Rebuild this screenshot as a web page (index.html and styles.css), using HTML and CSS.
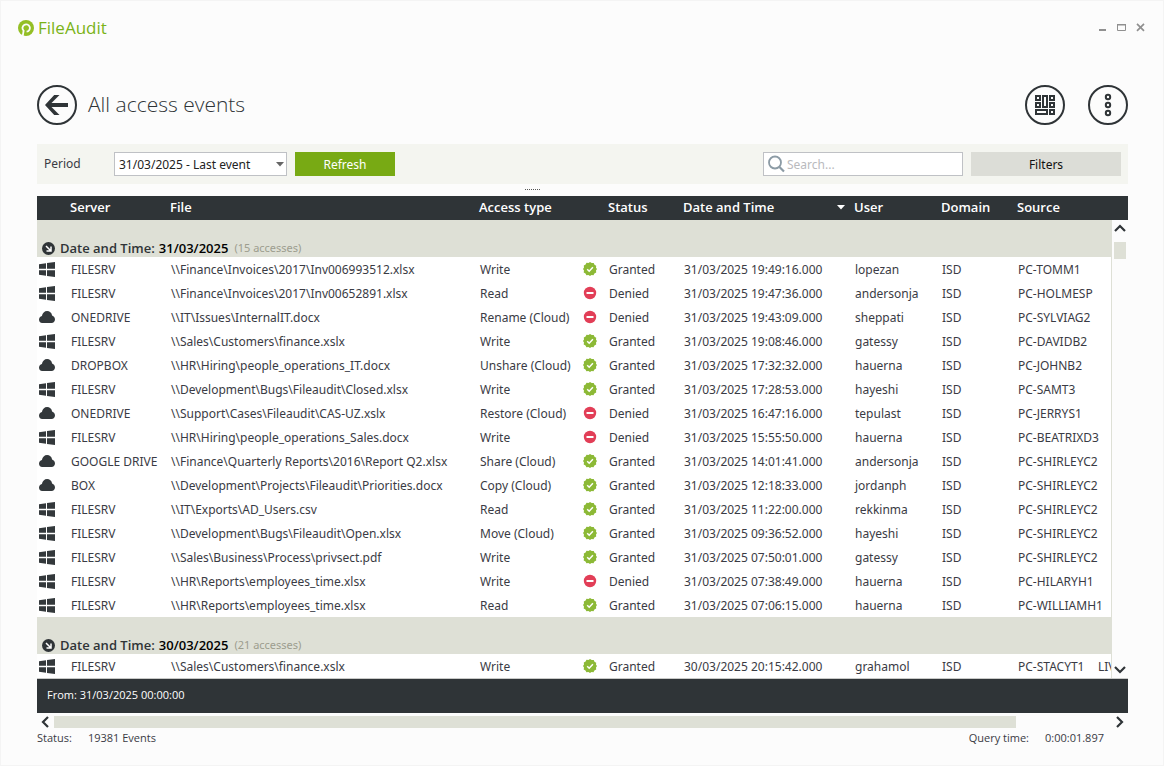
FILE: index.html
```
<!DOCTYPE html>
<html lang="en">
<head>
<meta charset="utf-8">
<title>FileAudit</title>
<link rel="stylesheet" href="styles.css">
</head>
<body>
<svg class="sprite" aria-hidden="true">
  <symbol id="win" viewBox="0 0 16 15"><path d="M0 2.200 7 1.200V6.700H0zM8 1 16 0V6.700H8zM0 8.200H7V13.800L0 12.800zM8 8.200H16V15L8 14z"/></symbol>
  <symbol id="cloud" viewBox="0 0 16 12"><path d="M3.600 12A3.500 3.500 0 0 1 0 8.600C0 6.900 1.200 5.500 2.900 5 3.400 2 5.500 0 8.100 0c2.500 0 4.600 1.700 5 4.400C14.900 5.100 16 6.600 16 8.300 16 10.500 14.500 12 12.500 12z"/></symbol>
  <symbol id="ok" viewBox="0 0 14 14"><path fill="#8cb936" d="M7 0l1.700 1.100 2-.2.8 1.800 1.700 1-.2 2L14 7l-1 1.600.2 2-1.800.9-.9 1.800-2-.3L7 14l-1.600-1-2 .2-.9-1.800-1.800-.9.300-2L0 7l1-1.500-.2-2 1.800-.9.900-1.800 2 .3z"/><path fill="none" stroke="#fff" stroke-width="1.500" d="M4.200 7.200l2 2 3.700-4"/></symbol>
  <symbol id="no" viewBox="0 0 14 14"><circle cx="7" cy="7" r="6.200" fill="#e23e57"/><path fill="#fff" d="M3.500 6h7v2h-7z"/></symbol>
  <symbol id="fold" viewBox="0 0 13 13"><circle cx="6.500" cy="6.500" r="6.500" fill="#2f3437"/><path fill="none" stroke="#fff" stroke-width="1.500" d="M4 4l4.500 4.500M9 4.500V9H4.500"/></symbol>
</svg>
<div class="window">
  <header class="titlebar">
    <div class="brand">
      <svg width="17" height="17" viewBox="0 0 17 17"><circle cx="8" cy="8" r="8" fill="#94bf26"/><path d="M4.600 17l1-6.300A3.700 3.700 0 1 1 8.600 11.700" fill="none" stroke="#fcfcfc" stroke-width="1.800"/><circle cx="8.200" cy="8" r="1.900" fill="#94bf26"/></svg>
      <span>FileAudit</span>
    </div>
    <div class="winbtns">
      <button aria-label="Minimize"><svg width="10" height="9" viewBox="0 0 10 9"><path d="M1 6h7v2H1z" fill="#909090"/></svg></button>
      <button aria-label="Maximize"><svg width="10" height="9" viewBox="0 0 10 9"><path d="M.5 1.500h8v6h-8z" fill="none" stroke="#909090"/><path d="M0 1h9v1.500H0z" fill="#909090"/></svg></button>
      <button aria-label="Close"><svg width="10" height="9" viewBox="0 0 10 9"><path d="M1 .8l7 7M8 .8l-7 7" fill="none" stroke="#909090" stroke-width="1.700"/></svg></button>
    </div>
  </header>
  <main class="content">
    <div class="heading">
      <button class="round" aria-label="Back"><svg width="40" height="40" viewBox="0 0 40 40"><circle cx="20" cy="20" r="19" fill="none" stroke="#2f3437" stroke-width="2"/><path d="M31 18v4H14.500l8 8h-5.300L8 20l9.200-10h5.300l-8 8z" fill="#2f3437"/></svg></button>
      <h1>All access events</h1>
      <button class="round" aria-label="Dashboard"><svg width="40" height="40" viewBox="0 0 40 40" fill="none" stroke="#2f3437"><circle cx="20" cy="20" r="19" stroke-width="2"/><path stroke-width="2" d="M11 11h4v4h-4zM11 18h4v4h-4zM18 11h4v11h-4zM25 11h4v4h-4zM25 18h4v4h-4zM11 25h11v4H11zM25 25h4v4h-4z"/></svg></button>
      <button class="round more" aria-label="More"><svg width="40" height="40" viewBox="0 0 40 40" fill="none" stroke="#2f3437" stroke-width="2"><circle cx="20" cy="20" r="19"/><circle cx="20" cy="12" r="2.200"/><circle cx="20" cy="20" r="2.200"/><circle cx="20" cy="28" r="2.200"/></svg></button>
    </div>
    <div class="toolbar">
      <label for="period">Period</label>
      <div class="select">
        <select id="period"><option>31/03/2025 - Last event</option></select>
        <svg width="8" height="5" viewBox="0 0 8 5"><path d="M0 0h8L4 4.500z" fill="#666"/></svg>
      </div>
      <button class="refresh">Refresh</button>
      <label class="search">
        <svg width="18" height="18" viewBox="0 0 18 18" fill="none" stroke="#8c9ba5"><circle cx="7" cy="7.500" r="6" stroke-width="1.800"/><path d="M11.500 12l4.500 4.500" stroke-width="2.200"/></svg>
        <input type="search" placeholder="Search..." aria-label="Search">
      </label>
      <button class="filters">Filters</button>
    </div>
    <div class="grip"><i></i></div>
    <div class="grid">
      <table>
        <colgroup><col class="c-icon"><col class="c-server"><col><col class="c-access"><col class="c-mark"><col class="c-status"><col class="c-date"><col class="c-user"><col class="c-domain"><col class="c-source"><col class="c-extra"></colgroup>
        <thead><tr><th></th><th>Server</th><th>File</th><th>Access type</th><th></th><th>Status</th><th><span class="sort">Date and Time<svg width="10" height="5" viewBox="0 0 10 5"><path d="M1 0h8L5 4.500z" fill="#fff"/></svg></span></th><th>User</th><th>Domain</th><th>Source</th><th></th></tr></thead>
        <tbody>
          <tr class="group"><td colspan="11"><div><svg width="13" height="13"><use href="#fold"/></svg><b>Date and Time:</b><b class="day">31/03/2025</b><span>(15 accesses)</span></div></td></tr>
          <tr><td><svg width="16" height="15"><use href="#win"/></svg></td><td>FILESRV</td><td>\\Finance\Invoices\2017\Inv006993512.xlsx</td><td>Write</td><td class="mark"><svg width="14" height="14"><use href="#ok"/></svg></td><td>Granted</td><td>31/03/2025 19:49:16.000</td><td>lopezan</td><td>ISD</td><td>PC-TOMM1</td><td></td></tr>
          <tr><td><svg width="16" height="15"><use href="#win"/></svg></td><td>FILESRV</td><td>\\Finance\Invoices\2017\Inv00652891.xlsx</td><td>Read</td><td class="mark"><svg width="14" height="14"><use href="#no"/></svg></td><td>Denied</td><td>31/03/2025 19:47:36.000</td><td>andersonja</td><td>ISD</td><td>PC-HOLMESP</td><td></td></tr>
          <tr><td class="mark"><svg width="16" height="12"><use href="#cloud"/></svg></td><td>ONEDRIVE</td><td>\\IT\Issues\InternalIT.docx</td><td>Rename (Cloud)</td><td class="mark"><svg width="14" height="14"><use href="#no"/></svg></td><td>Denied</td><td>31/03/2025 19:43:09.000</td><td>sheppati</td><td>ISD</td><td>PC-SYLVIAG2</td><td></td></tr>
          <tr><td><svg width="16" height="15"><use href="#win"/></svg></td><td>FILESRV</td><td>\\Sales\Customers\finance.xslx</td><td>Write</td><td class="mark"><svg width="14" height="14"><use href="#ok"/></svg></td><td>Granted</td><td>31/03/2025 19:08:46.000</td><td>gatessy</td><td>ISD</td><td>PC-DAVIDB2</td><td></td></tr>
          <tr><td class="mark"><svg width="16" height="12"><use href="#cloud"/></svg></td><td>DROPBOX</td><td>\\HR\Hiring\people_operations_IT.docx</td><td>Unshare (Cloud)</td><td class="mark"><svg width="14" height="14"><use href="#ok"/></svg></td><td>Granted</td><td>31/03/2025 17:32:32.000</td><td>hauerna</td><td>ISD</td><td>PC-JOHNB2</td><td></td></tr>
          <tr><td><svg width="16" height="15"><use href="#win"/></svg></td><td>FILESRV</td><td>\\Development\Bugs\Fileaudit\Closed.xlsx</td><td>Write</td><td class="mark"><svg width="14" height="14"><use href="#ok"/></svg></td><td>Granted</td><td>31/03/2025 17:28:53.000</td><td>hayeshi</td><td>ISD</td><td>PC-SAMT3</td><td></td></tr>
          <tr><td class="mark"><svg width="16" height="12"><use href="#cloud"/></svg></td><td>ONEDRIVE</td><td>\\Support\Cases\Fileaudit\CAS-UZ.xslx</td><td>Restore (Cloud)</td><td class="mark"><svg width="14" height="14"><use href="#no"/></svg></td><td>Denied</td><td>31/03/2025 16:47:16.000</td><td>tepulast</td><td>ISD</td><td>PC-JERRYS1</td><td></td></tr>
          <tr><td><svg width="16" height="15"><use href="#win"/></svg></td><td>FILESRV</td><td>\\HR\Hiring\people_operations_Sales.docx</td><td>Write</td><td class="mark"><svg width="14" height="14"><use href="#no"/></svg></td><td>Denied</td><td>31/03/2025 15:55:50.000</td><td>hauerna</td><td>ISD</td><td>PC-BEATRIXD3</td><td></td></tr>
          <tr><td class="mark"><svg width="16" height="12"><use href="#cloud"/></svg></td><td>GOOGLE DRIVE</td><td>\\Finance\Quarterly Reports\2016\Report Q2.xlsx</td><td>Share (Cloud)</td><td class="mark"><svg width="14" height="14"><use href="#ok"/></svg></td><td>Granted</td><td>31/03/2025 14:01:41.000</td><td>andersonja</td><td>ISD</td><td>PC-SHIRLEYC2</td><td></td></tr>
          <tr><td class="mark"><svg width="16" height="12"><use href="#cloud"/></svg></td><td>BOX</td><td>\\Development\Projects\Fileaudit\Priorities.docx</td><td>Copy (Cloud)</td><td class="mark"><svg width="14" height="14"><use href="#ok"/></svg></td><td>Granted</td><td>31/03/2025 12:18:33.000</td><td>jordanph</td><td>ISD</td><td>PC-SHIRLEYC2</td><td></td></tr>
          <tr><td><svg width="16" height="15"><use href="#win"/></svg></td><td>FILESRV</td><td>\\IT\Exports\AD_Users.csv</td><td>Read</td><td class="mark"><svg width="14" height="14"><use href="#ok"/></svg></td><td>Granted</td><td>31/03/2025 11:22:00.000</td><td>rekkinma</td><td>ISD</td><td>PC-SHIRLEYC2</td><td></td></tr>
          <tr><td><svg width="16" height="15"><use href="#win"/></svg></td><td>FILESRV</td><td>\\Development\Bugs\Fileaudit\Open.xlsx</td><td>Move (Cloud)</td><td class="mark"><svg width="14" height="14"><use href="#ok"/></svg></td><td>Granted</td><td>31/03/2025 09:36:52.000</td><td>hayeshi</td><td>ISD</td><td>PC-SHIRLEYC2</td><td></td></tr>
          <tr><td><svg width="16" height="15"><use href="#win"/></svg></td><td>FILESRV</td><td>\\Sales\Business\Process\privsect.pdf</td><td>Write</td><td class="mark"><svg width="14" height="14"><use href="#ok"/></svg></td><td>Granted</td><td>31/03/2025 07:50:01.000</td><td>gatessy</td><td>ISD</td><td>PC-SHIRLEYC2</td><td></td></tr>
          <tr><td><svg width="16" height="15"><use href="#win"/></svg></td><td>FILESRV</td><td>\\HR\Reports\employees_time.xlsx</td><td>Write</td><td class="mark"><svg width="14" height="14"><use href="#no"/></svg></td><td>Denied</td><td>31/03/2025 07:38:49.000</td><td>hauerna</td><td>ISD</td><td>PC-HILARYH1</td><td></td></tr>
          <tr><td><svg width="16" height="15"><use href="#win"/></svg></td><td>FILESRV</td><td>\\HR\Reports\employees_time.xlsx</td><td>Read</td><td class="mark"><svg width="14" height="14"><use href="#ok"/></svg></td><td>Granted</td><td>31/03/2025 07:06:15.000</td><td>hauerna</td><td>ISD</td><td>PC-WILLIAMH1</td><td></td></tr>
          <tr class="group"><td colspan="11"><div><svg width="13" height="13"><use href="#fold"/></svg><b>Date and Time:</b><b class="day">30/03/2025</b><span>(21 accesses)</span></div></td></tr>
          <tr><td><svg width="16" height="15"><use href="#win"/></svg></td><td>FILESRV</td><td>\\Sales\Customers\finance.xslx</td><td>Write</td><td class="mark"><svg width="14" height="14"><use href="#ok"/></svg></td><td>Granted</td><td>30/03/2025 20:15:42.000</td><td>grahamol</td><td>ISD</td><td>PC-STACYT1</td><td>LIV</td></tr>
        </tbody>
      </table>
      <div class="vscroll">
        <button aria-label="Scroll up"><svg width="12" height="8" viewBox="0 0 12 8"><path d="M1 7l5-5 5 5" fill="none" stroke="#2f3437" stroke-width="2.200"/></svg></button>
        <i class="vthumb"></i>
        <button class="down" aria-label="Scroll down"><svg width="12" height="8" viewBox="0 0 12 8"><path d="M1 1l5 5 5-5" fill="none" stroke="#2f3437" stroke-width="2.200"/></svg></button>
      </div>
    </div>
    <div class="from">From: 31/03/2025 00:00:00</div>
    <div class="hscroll">
      <button aria-label="Scroll left"><svg width="8" height="12" viewBox="0 0 8 12"><path d="M7 1L2 6l5 5" fill="none" stroke="#2f3437" stroke-width="2.200"/></svg></button>
      <div class="htrack"><i></i></div>
      <button aria-label="Scroll right"><svg width="8" height="12" viewBox="0 0 8 12"><path d="M1 1l5 5-5 5" fill="none" stroke="#2f3437" stroke-width="2.200"/></svg></button>
    </div>
    <footer class="status"><span>Status:</span><span>19381 Events</span><span class="query">Query time:</span><span>0:00:01.897</span></footer>
  </main>
</div>
</body>
</html>
```
FILE: styles.css
```
* { box-sizing: border-box; }
body {
  margin: 0;
  background: #fcfcfc;
  color: #3a3b44;
  font: 12px/18px "Noto Sans", "Open Sans", sans-serif;
}
button, input, select { font: inherit; color: inherit; border: 0; padding: 0; margin: 0; background: none; border-radius: 0; }
svg { display: block; flex: none; }
.sprite { position: absolute; width: 0; height: 0; }
.window { min-height: 100vh; border: 1px solid #f4f4f4; display: flex; flex-direction: column; }
.titlebar { display: flex; justify-content: space-between; align-items: flex-start; padding: 15px 17px 0; }
.brand { display: flex; align-items: center; gap: 3px; color: #7ab317; font: 17px/24px "Open Sans", sans-serif; }
.winbtns { display: flex; gap: 9px; padding: 7px 0; }
.content { padding: 45px 35px 0 36px; }
.heading { display: flex; align-items: center; }
.heading h1 { flex: 1; margin: 0 0 0 11px; padding-bottom: 2px; font: 300 21px/28px "Open Sans", sans-serif; color: #2f3437; }
.round { width: 40px; height: 40px; }
.more { margin-left: 23px; }
.toolbar { display: flex; align-items: center; height: 40px; margin-top: 19px; padding: 0 7px; background: #f4f5f0; }
.toolbar > label:first-child { width: 70px; }
.select { position: relative; width: 173px; }
.select select { appearance: none; width: 100%; height: 24px; padding: 1px 4px 0; background: #fff; border: 1px solid #bfc1c5; color: #222; }
.select svg { position: absolute; right: 3px; top: 10px; pointer-events: none; }
.refresh { width: 100px; height: 24px; margin-left: 8px; padding-top: 2px; background: #78aa14; color: #fff; }
.search { display: flex; align-items: center; gap: 1px; width: 200px; height: 24px; margin-left: auto; padding: 0 4px; background: #fff; border: 1px solid #bfc1c5; }
.search input { flex: 1; min-width: 0; padding-top: 1px; outline: 0; }
.search input::placeholder { color: #b9babd; opacity: 1; }
.filters { width: 150px; height: 24px; margin-left: 8px; padding-top: 2px; background: #dcddd7; color: #111; }
.grip { display: flex; justify-content: center; align-items: flex-start; height: 12px; padding: 5px 100px 0 0; }
.grip i { width: 15px; border-top: 1px dotted #555; }
.grid { position: relative; overflow: hidden; border-bottom: 1px solid #c9cac8; }
table { width: 100%; table-layout: fixed; border-collapse: collapse; background: #fff; }
.c-icon { width: 33px; }
.c-server { width: 100px; }
.c-access { width: 103px; }
.c-mark { width: 26px; }
.c-status { width: 75px; }
.c-date { width: 171px; }
.c-user { width: 87px; }
.c-domain { width: 76px; }
.c-source { width: 80px; }
.c-extra { width: 31px; }
th, td { height: 24px; padding: 1px 0 0 1px; text-align: left; white-space: nowrap; }
th { padding: 0 0 2px; background: #2f3437; color: #fff; font: 600 13px/18px "Open Sans", sans-serif; }
td.mark { padding-top: 0; padding-bottom: 1px; }
.sort { display: flex; align-items: center; justify-content: space-between; padding-right: 8px; }
.group td { height: 37px; padding: 0; background: #dee0d6; vertical-align: bottom; }
.group div { display: flex; align-items: center; padding-left: 5px; }
.group b { margin-left: 5px; color: #2f3437; font: 600 13px/18px "Open Sans", sans-serif; }
.group .day { margin-left: 4px; color: #000; }
.group span { margin-left: 6px; color: #9c9d8e; font-size: 11px; }
td svg { fill: #33383b; }
tbody td:first-child { padding-left: 2px; }
.group td:first-child { padding-left: 0; }
.vscroll { position: absolute; top: 24px; right: 0; bottom: 0; width: 17px; display: flex; flex-direction: column; align-items: center; padding: 4px 0; background: #fcfcfc; border-left: 1px solid #dee0d6; }
.vthumb { width: 12px; height: 17px; margin-top: 10px; background: #dee0d6; }
.down { margin-top: auto; }
.from { padding: 7px 10px 9px; background: #2f3437; color: #fff; font: 11px/18px "Open Sans", sans-serif; }
.hscroll { display: flex; align-items: center; justify-content: space-between; height: 15px; margin-top: 1px; padding: 0 4px; }
.htrack { flex: 1; margin: 0 5px; }
.htrack i { display: block; width: 91%; height: 12px; background: #dee0d6; }
.status { display: flex; gap: 16px; padding-right: 24px; font: 11px/18px "Open Sans", sans-serif; }
.query { margin-left: auto; }
```
